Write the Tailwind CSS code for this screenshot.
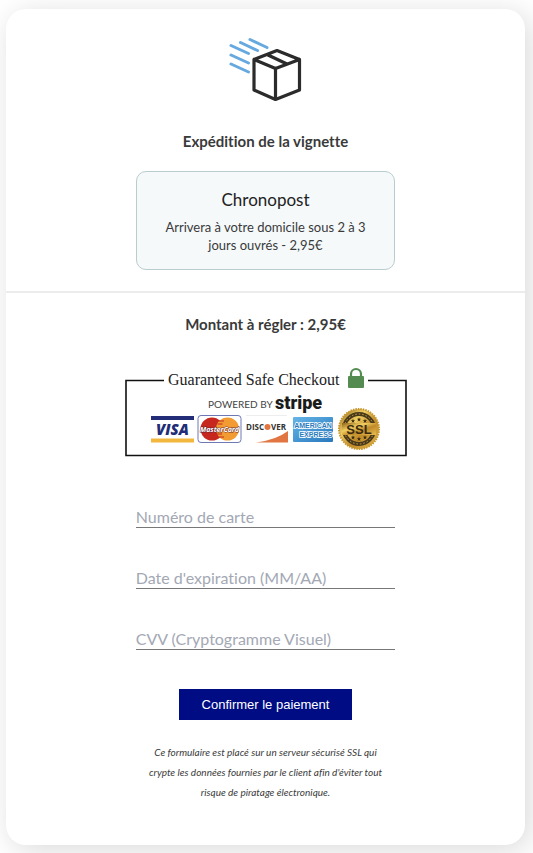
<!DOCTYPE html>
<html lang="fr">
<head>
  <meta charset="UTF-8" />
  <meta name="viewport" content="width=device-width, initial-scale=1" />
  <title>Paiement - maquette</title>
  <script src="https://cdn.jsdelivr.net/npm/@tailwindcss/browser@4"></script>
</head>
<body class="bg-white pt-[9px] pb-2 pl-[6px] pr-2 font-['Lato',sans-serif] [font-variant-ligatures:none] text-[#3a3a3a] overflow-x-hidden">
  <main class="bg-white rounded-[20px] shadow-[5px_5px_30px_rgba(0,0,0,0.15)] text-center">
    <section class="border-b-2 border-[#ececec] pt-7 pb-[21px]">
      <svg class="mx-auto w-[76px] h-[66px]" viewBox="-2 0 76 66" fill="none" stroke-linecap="round" stroke-linejoin="round" aria-hidden="true">
        <path d="M20 2.500L37 10.500M10.500 5.500L27.500 13.500M1 8.500L18.500 16.500M1 18L18.500 26M1 27L18.500 35" stroke="#65a9e0" stroke-width="3" />
        <path d="M47 13.500L69.500 22.500V53L45.500 62.500L24 53V22.500ZM24 22.500L45.500 31.500L69.500 22.500M45.500 31.500V62.500M38 18L57 27" stroke="#2b2b2b" stroke-width="3.200" />
      </svg>
      <h1 class="mt-7 text-[15px] leading-5 font-bold">Expédition de la vignette</h1>
      <div class="mt-5 mx-auto w-1/2 rounded-[10px] border border-[#b9cccf] bg-[#f5f9fa] px-5 pt-4 pb-[15px]">
        <h2 class="text-[17px] leading-6 text-[#222]">Chronopost</h2>
        <p class="mt-1.5 text-[13px] leading-[18px]">Arrivera à votre domicile sous 2 à 3 jours ouvrés - 2,95€</p>
      </div>
    </section>

    <section class="pt-[21px] pb-[43px]">
      <h2 class="text-[15px] leading-5 font-bold">Montant à régler : 2,95€</h2>

      <svg class="mt-8 mx-auto w-[282px] h-[92px]" viewBox="0 0 282 92" role="img" aria-label="Guaranteed Safe Checkout">
        <defs>
          <linearGradient id="gold" x1="0" y1="0" x2="1" y2="1">
            <stop offset="0" stop-color="#8c6117" />
            <stop offset=".35" stop-color="#f2cf62" />
            <stop offset=".6" stop-color="#c08a28" />
            <stop offset="1" stop-color="#e8bd50" />
          </linearGradient>
          <linearGradient id="amex" x1="0" y1="0" x2="1" y2="1">
            <stop offset="0" stop-color="#65b5e8" />
            <stop offset="1" stop-color="#2878bd" />
          </linearGradient>
          <path id="star" d="M0-2.200L.6-.7 2.200-.7.9.3 1.400 1.900 0 .9-1.400 1.900-.9.3-2.200-.7-.6-.7Z" />
        </defs>
        <path d="M39 14.500H1V89.500H281V14.500H243" fill="none" stroke="#111" stroke-width="1.600" />
        <text x="43" y="19" font-family="Liberation Serif, serif" font-size="16" fill="#222">Guaranteed Safe Checkout</text>
        <path d="M226 11V8a5 5 0 0 1 10 0V11" fill="none" stroke="#538b50" stroke-width="2.200" />
        <rect x="223" y="10" width="16" height="12" rx="1" fill="#538b50" />
        <text x="83" y="42" font-family="Lato, sans-serif" font-size="10" fill="#444">POWERED BY</text>
        <text x="150" y="43" font-family="Roboto, sans-serif" font-size="18" font-weight="900" fill="#1b1b1b">stripe</text>

        <!-- Visa -->
        <path d="M26 50h43v4H26z" fill="#232d77" />
        <path d="M26 72.500h43v4H26z" fill="#f3b73e" />
        <text x="31" y="68.500" font-family="Open Sans, sans-serif" font-size="15" font-weight="800" font-style="italic" fill="#232d77">VISA</text>

        <!-- MasterCard -->
        <rect x="73" y="49.500" width="43" height="27" rx="3" fill="#fff" stroke="#6e78b4" />
        <circle cx="87" cy="63" r="11.500" fill="#c6281f" />
        <circle cx="102.500" cy="63" r="11.500" fill="#f29b32" />
        <path d="M94 55h5M92.500 58h5M92 68h5M94 71h5" stroke="#c6281f" stroke-width="1" />
        <text x="94.500" y="66" text-anchor="middle" font-family="Open Sans, sans-serif" font-size="7" font-weight="700" font-style="italic" fill="#fff" stroke="#5c2436" stroke-width=".8" paint-order="stroke">MasterCard</text>

        <!-- Discover -->
        <path d="M121 49.500H162" stroke="#ededed" />
        <text x="121" y="64" font-family="Open Sans, sans-serif" font-size="8" font-weight="700" fill="#333">DISC</text>
        <circle cx="142.500" cy="61" r="3" fill="#e27643" />
        <text x="146" y="64" font-family="Open Sans, sans-serif" font-size="8" font-weight="700" fill="#333">VER</text>
        <path d="M131 76.500Q151 74 163 65V76.500Z" fill="#e27643" />

        <!-- American Express -->
        <rect x="168" y="51" width="40" height="25" rx="1" fill="url(#amex)" />
        <text x="188" y="62" text-anchor="middle" font-family="Liberation Sans, sans-serif" font-size="7" font-weight="700" fill="#277bbd" stroke="#fff" stroke-width="1.600" paint-order="stroke">AMERICAN</text>
        <text x="191" y="71" text-anchor="middle" font-family="Liberation Sans, sans-serif" font-size="7" font-weight="700" fill="#277bbd" stroke="#fff" stroke-width="1.600" paint-order="stroke">EXPRESS</text>

        <!-- SSL seal -->
        <circle cx="234" cy="63" r="20" fill="url(#gold)" stroke="#c7982f" stroke-width="2" stroke-dasharray="1.500 1" />
        <circle cx="234" cy="63" r="15" fill="none" stroke="#4a3a1c" stroke-width="4" />
        <circle cx="234" cy="63" r="15" fill="none" stroke="#c99f46" stroke-width="1" stroke-dasharray="1.500 2" />
        <path d="M217 57H251V69H217Z" fill="url(#gold)" />
        <g fill="#3a2b12">
          <use href="#star" x="228" y="55" /><use href="#star" x="234" y="53.500" /><use href="#star" x="240" y="55" />
          <use href="#star" x="228" y="71.500" /><use href="#star" x="234" y="73" /><use href="#star" x="240" y="71.500" />
        </g>
        <text x="234" y="68" text-anchor="middle" font-family="Liberation Sans, sans-serif" font-size="13" font-weight="700" fill="#3a2b12">SSL</text>
      </svg>

      <div class="mt-12 mx-auto w-1/2">
        <input type="text" aria-label="Numéro de carte" placeholder="Numéro de carte" autocomplete="off" class="block w-full h-[22px] mb-[39px] border-b border-[#777] text-base leading-5 placeholder:text-[#a3a8b4] outline-none" />
        <input type="text" aria-label="Date d'expiration" placeholder="Date d'expiration (MM/AA)" autocomplete="off" class="block w-full h-[22px] mb-[39px] border-b border-[#777] text-base leading-5 placeholder:text-[#a3a8b4] outline-none" />
        <input type="text" aria-label="Cryptogramme visuel" placeholder="CVV (Cryptogramme Visuel)" autocomplete="off" class="block w-full h-[22px] mb-[39px] border-b border-[#777] text-base leading-5 placeholder:text-[#a3a8b4] outline-none" />
        <button type="button" class="block mx-auto w-2/3 h-[31px] bg-[#000c84] text-white text-[13px] font-['Liberation_Sans',sans-serif]">Confirmer le paiement</button>
        <p class="mt-[22px] px-1.5 text-[10px] leading-5 italic">Ce formulaire est placé sur un serveur sécurisé SSL qui crypte les données fournies par le client afin d'éviter tout risque de piratage électronique.</p>
      </div>
    </section>
  </main>
</body>
</html>
